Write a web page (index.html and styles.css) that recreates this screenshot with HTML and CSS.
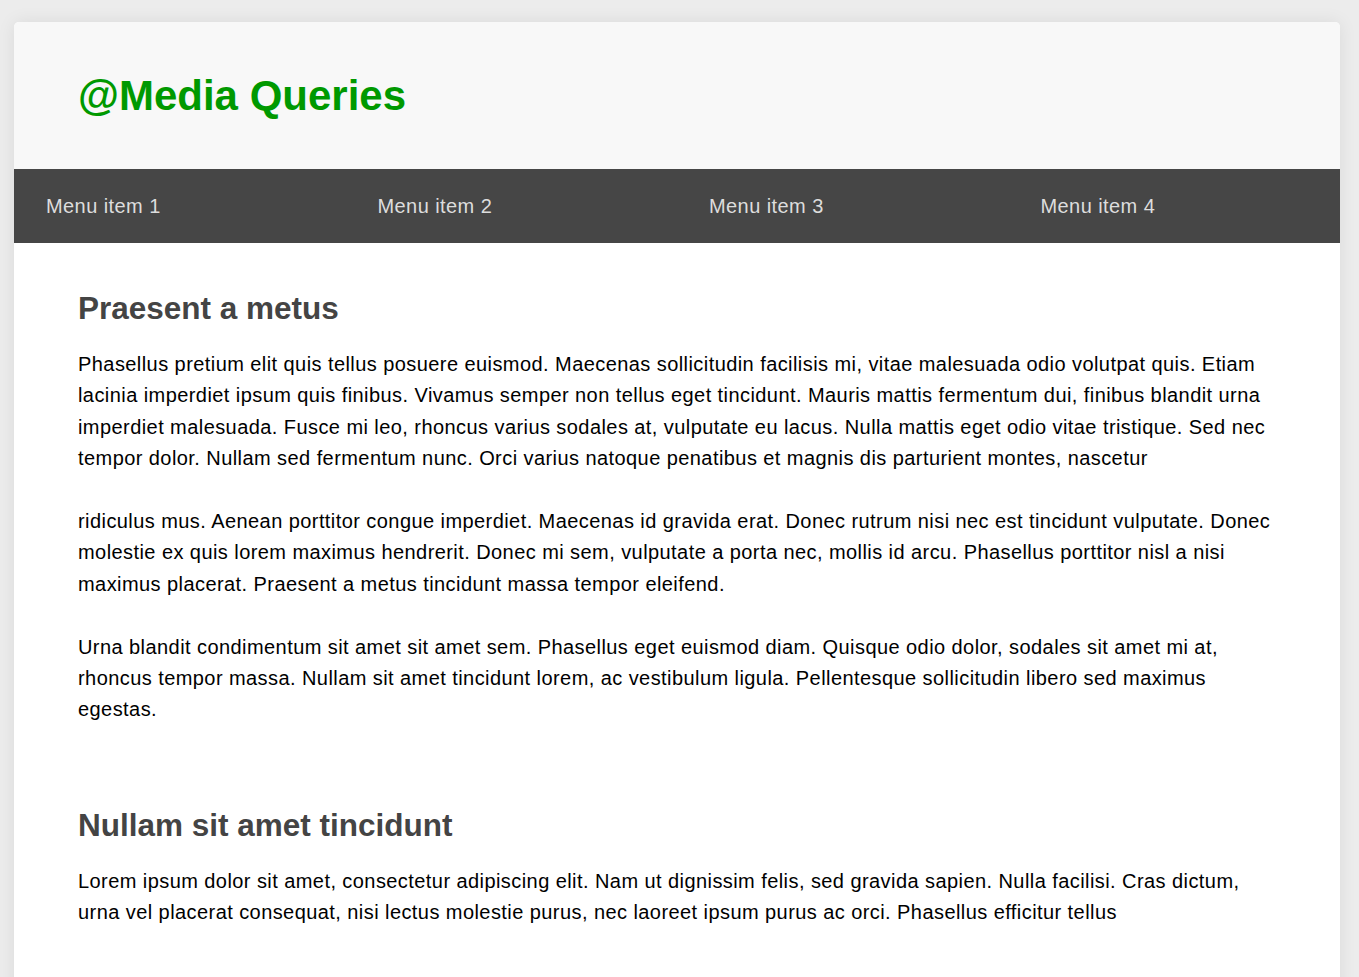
FILE: index.html
```html
<!DOCTYPE html>
<html>
<head>
<meta charset="utf-8">
<title>@Media Queries</title>
<link rel="stylesheet" href="styles.css">
</head>
<body>
<div class="page">
  <header class="header">
    <h1 class="title">@Media Queries</h1>
  </header>
  <nav class="nav">
    <a class="nav-item">Menu item 1</a>
    <a class="nav-item">Menu item 2</a>
    <a class="nav-item">Menu item 3</a>
    <a class="nav-item">Menu item 4</a>
  </nav>
  <main class="content">
    <section class="section">
      <h2 class="heading">Praesent a metus</h2>
      <p class="text">Phasellus pretium elit quis tellus posuere euismod. Maecenas sollicitudin facilisis mi, vitae malesuada odio volutpat quis. Etiam lacinia imperdiet ipsum quis finibus. Vivamus semper non tellus eget tincidunt. Mauris mattis fermentum dui, finibus blandit urna imperdiet malesuada. Fusce mi leo, rhoncus varius sodales at, vulputate eu lacus. Nulla mattis eget odio vitae tristique. Sed nec tempor dolor. Nullam sed fermentum nunc. Orci varius natoque penatibus et magnis dis parturient montes, nascetur</p>
      <p class="text">ridiculus mus. Aenean porttitor congue imperdiet. Maecenas id gravida erat. Donec rutrum nisi nec est tincidunt vulputate. Donec molestie ex quis lorem maximus hendrerit. Donec mi sem, vulputate a porta nec, mollis id arcu. Phasellus porttitor nisl a nisi maximus placerat. Praesent a metus tincidunt massa tempor eleifend.</p>
      <p class="text">Urna blandit condimentum sit amet sit amet sem. Phasellus eget euismod diam. Quisque odio dolor, sodales sit amet mi at, rhoncus tempor massa. Nullam sit amet tincidunt lorem, ac vestibulum ligula. Pellentesque sollicitudin libero sed maximus egestas.</p>
    </section>
    <section class="section">
      <h2 class="heading">Nullam sit amet tincidunt</h2>
      <p class="text">Lorem ipsum dolor sit amet, consectetur adipiscing elit. Nam ut dignissim felis, sed gravida sapien. Nulla facilisi. Cras dictum, urna vel placerat consequat, nisi lectus molestie purus, nec laoreet ipsum purus ac orci. Phasellus efficitur tellus</p>
    </section>
  </main>
</div>
</body>
</html>
```

FILE: styles.css
```css
html, body {
  margin: 0;
  padding: 0;
}
body {
  background: #ececec;
  font-family: "Liberation Sans", Arial, sans-serif;
  padding: 22px 19px 0 14px;
  min-height: 100vh;
  box-sizing: border-box;
}
.page {
  background: #ffffff;
  border-radius: 5px 5px 0 0;
  box-shadow: 0 0 18px rgba(0, 0, 0, 0.08);
  overflow: hidden;
  min-height: 955px;
}
.header {
  background: #f8f8f8;
  height: 147px;
  display: flex;
  align-items: center;
  padding: 0 64px;
}
.title {
  margin: 0;
  color: #009900;
  font-size: 42px;
  font-weight: bold;
}
.nav {
  background: #464646;
  height: 74px;
  display: grid;
  grid-template-columns: repeat(4, 1fr);
  align-items: center;
}
.nav-item {
  color: #dddddd;
  font-size: 20px;
  letter-spacing: 0.42px;
  padding-left: 32px;
}
.content {
  padding: 47px 64px 0 64px;
}
.section {
  margin-bottom: 81px;
}
.heading {
  margin: 0 0 22px 0;
  color: #444444;
  font-size: 31.5px;
  font-weight: bold;
}
.text {
  margin: 0 0 31.4px 0;
  font-size: 20px;
  letter-spacing: 0.43px;
  line-height: 31.4px;
  color: #000000;
}
```
